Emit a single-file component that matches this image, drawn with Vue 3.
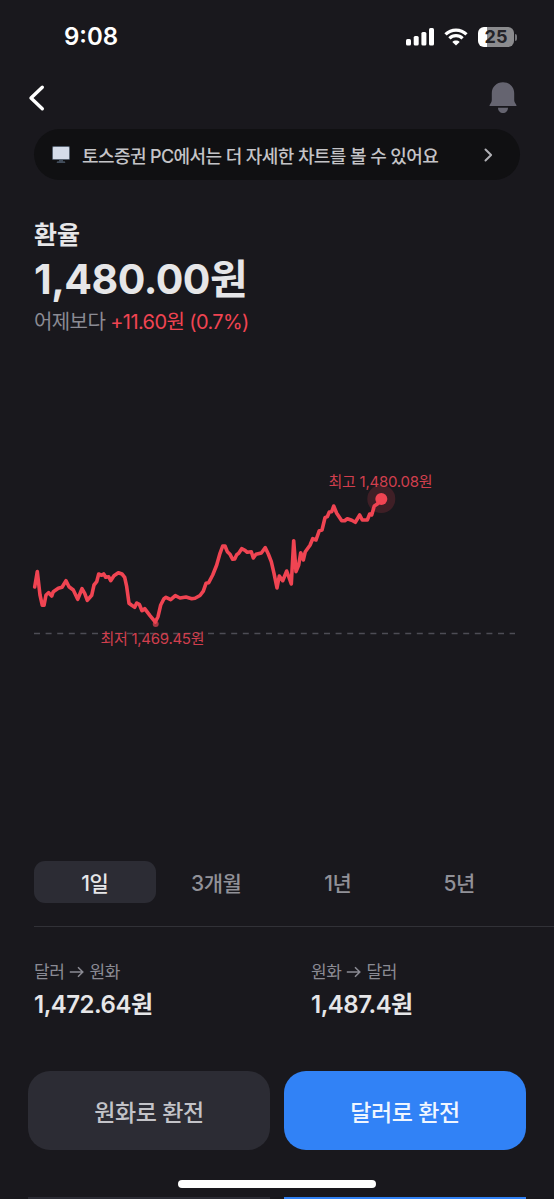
<template>
  <div class="screen">
    <div class="status-bar">
      <span class="time">9:08</span>
      <div class="status-icons">
        <svg class="signal" width="28" height="18" viewBox="0 0 28 18">
          <rect x="0" y="11" width="5" height="6.5" rx="1.5" />
          <rect x="7.7" y="8" width="5" height="9.5" rx="1.5" />
          <rect x="15.4" y="4" width="5" height="13.5" rx="1.5" />
          <rect x="23" y="0" width="5" height="17.5" rx="1.5" />
        </svg>
        <svg class="wifi" width="24" height="18" viewBox="0 0 24 18">
          <path d="M1.5 6.4C7.3.7 16.7.7 22.5 6.4" />
          <path d="M5.4 10.4c3.7-3.6 9.5-3.6 13.2 0" />
          <path class="dot" d="M12 17.5 8.3 13.9c2-1.8 5.4-1.8 7.4 0z" />
        </svg>
        <div class="battery">
          <div class="battery-body" :style="{ '--level': battery + '%' }">{{ battery }}</div>
          <div class="battery-tip"></div>
        </div>
      </div>
    </div>

    <header class="nav">
      <button class="icon-button" aria-label="뒤로">
        <svg width="18" height="28" viewBox="0 0 18 28">
          <path class="back" d="M14.3 3.2 3 14l11.3 10.8" />
        </svg>
      </button>
      <button class="icon-button" aria-label="알림">
        <svg width="28" height="32" viewBox="0 0 28 32">
          <path class="bell" d="M14 .3C7.6.3 2.8 5 2.8 11.2v6.3c0 2.2-.6 3.2-1.6 4.5-.7.9-.7 1.7-.7 2.1h27c0-.4 0-1.2-.7-2.1-1-1.3-1.6-2.3-1.6-4.5v-6.3C25.200 5 20.400.3 14 .3z" />
          <path class="bell" d="M9 25.700h10c0 3.100-2.200 5.300-5 5.300s-5-2.200-5-5.300z" />
        </svg>
      </button>
    </header>

    <a class="banner">
      <svg width="18" height="18" viewBox="0 0 18 18">
        <path fill="#424d5b" d="M7 12h4v3.300h1.500q.8 0 .8 1.700H4.700q0-1.700.8-1.700H7z" />
        <rect width="18" height="14" rx="1.500" fill="#56616f" />
        <rect x="1" y="1" width="16" height="12" rx=".5" fill="#d4dce9" />
      </svg>
      <span class="banner-text">토스증권 PC에서는 더 자세한 차트를 볼 수 있어요</span>
      <svg class="chevron" width="9" height="14" viewBox="0 0 9 14">
        <path d="m1.500 1.500 5.600 5.500-5.600 5.500" />
      </svg>
    </a>

    <section class="summary">
      <h1>환율</h1>
      <p class="rate">1,480.00원</p>
      <p class="change">어제보다 <span>+11.60원 (0.7%)</span></p>
    </section>

    <svg class="chart" width="554" height="340" viewBox="0 440 554 340">
      <line class="baseline" x1="34" y1="633.500" x2="515" y2="633.500" />
      <circle class="low-dot" cx="155.700" cy="624" r="3" />
      <polyline class="line" :points="linePoints" />
      <circle class="halo" cx="381.300" cy="499" r="14" />
      <circle class="high-dot" cx="381.300" cy="499" r="6" />
      <text x="328.500" y="486.500" textLength="104">최고 1,480.08원</text>
      <text x="100.500" y="643.500" textLength="104">최저 1,469.45원</text>
    </svg>

    <nav class="periods">
      <button
        v-for="period in periods"
        :key="period"
        :class="{ active: period === selected }"
        @click="selected = period"
      >
        {{ period }}
      </button>
    </nav>

    <section class="quotes">
      <div v-for="quote in quotes" :key="quote.from" class="quote">
        <p class="quote-label">
          {{ quote.from }}
          <svg width="15" height="12" viewBox="0 0 15 12">
            <path d="M.8 6h13M9 1.200 13.800 6 9 10.800" />
          </svg>
          {{ quote.to }}
        </p>
        <p class="quote-value">{{ quote.value }}</p>
      </div>
    </section>

    <footer class="actions">
      <button class="secondary">원화로 환전</button>
      <button class="primary">달러로 환전</button>
    </footer>
    <div class="home-indicator"></div>
    <div class="bottom-edge">
      <span class="secondary"></span>
      <span class="primary"></span>
    </div>
  </div>
</template>

<script setup>
import { ref } from 'vue'

const battery = 25
const periods = ['1일', '3개월', '1년', '5년']
const selected = ref('1일')

const quotes = [
  { from: '달러', to: '원화', value: '1,472.64원' },
  { from: '원화', to: '달러', value: '1,487.4원' }
]

const points = [
  [34.7, 587], [37.3, 571.5], [40, 595], [42.3, 605.3], [44, 605.3], [46, 595], [48.7, 592.7],
  [51.7, 596], [53.3, 591.7], [58.3, 588.3], [62, 587.3], [66, 580.7], [69, 586.7], [73.3, 590],
  [77.7, 599.3], [82, 588.7], [84.7, 593.3], [87.3, 600.3], [91.7, 595.3], [94, 585], [96.7, 581.7],
  [98.7, 574], [101.7, 575.3], [103.7, 574], [105.7, 577.3], [108.7, 576.7], [110.7, 580.7],
  [114, 575.7], [118.3, 572.7], [122, 574], [124.7, 577.3], [126.7, 586.7], [129, 603.3],
  [131.7, 605.3], [134.7, 607.3], [136.7, 603], [139.3, 604.3], [142, 610.7], [144.7, 608.7],
  [150, 615.7], [155.3, 622], [158, 616.7], [160.7, 605], [164, 598.7], [166, 597.3],
  [170.7, 599.7], [175.3, 595.7], [180, 598], [186, 597], [191.7, 598.7], [195, 598.3],
  [200, 595.5], [203.3, 591.2], [206, 583.3], [208.7, 582.7], [212.7, 575], [216.7, 565],
  [220, 553.3], [222.7, 546], [225, 546], [227.3, 551.7], [230, 554.3], [232.7, 559.3],
  [234.7, 559], [236.7, 554.7], [238.7, 553.3], [241.7, 548.7], [245, 550.3], [247.3, 552.3],
  [251.3, 551.7], [253.3, 558], [256, 554.3], [261.3, 553], [265.3, 547.7], [268.3, 554],
  [271.3, 561.7], [274, 573.3], [277, 588], [279.3, 576], [282.7, 580.7], [286.7, 571],
  [291.3, 584], [293.7, 540.7], [296, 571.7], [298.7, 565], [300.7, 552.7], [303.3, 560],
  [305.3, 551.7], [310, 545.3], [312.7, 538.7], [316, 540], [319.3, 530.7], [322, 530],
  [325, 517.7], [327.3, 516.7], [329.3, 512], [331.7, 511.7], [333.7, 506], [336.7, 513.3],
  [341.7, 520.7], [344.7, 520.7], [347.3, 518.7], [351.7, 520.3], [355.3, 522.3], [359.7, 515],
  [362.3, 520], [367.3, 520], [369.7, 514], [371.7, 515], [374.3, 506], [377.3, 504], [381.3, 499.3]
]
const linePoints = points.map((p) => p.join(',')).join(' ')
</script>

<style>
body {
  margin: 0;
  background: #19181d;
}
</style>

<style scoped>
.screen {
  display: flex;
  flex-direction: column;
  width: 554px;
  height: 1199px;
  overflow: hidden;
  background: #19181d;
  color: #e6e6e8;
  font-family: Inter, "Noto Sans CJK KR", sans-serif;
}
h1,
p {
  margin: 0;
  white-space: nowrap;
}
button {
  padding: 0;
  border: none;
  background: none;
  color: inherit;
  font: inherit;
  cursor: pointer;
}
svg {
  display: block;
  flex: none;
}
.status-bar {
  display: flex;
  justify-content: space-between;
  height: 74px;
  padding: 0 37px 0 64px;
  line-height: 74px;
  color: #fff;
  box-sizing: border-box;
}
.time {
  font-size: 24px;
  font-weight: 600;
}
.status-icons {
  display: flex;
  align-items: center;
  gap: 10px;
}
.signal {
  fill: #fff;
}
.wifi {
  fill: none;
  stroke: #fff;
  stroke-width: 3.2;
}
.wifi .dot {
  fill: #fff;
  stroke: none;
}
.battery {
  display: flex;
  align-items: center;
  gap: 1px;
}
.battery-body {
  width: 36px;
  height: 20px;
  border-radius: 6px;
  background: linear-gradient(to right, #fff var(--level), #8b8b8e var(--level));
  color: #242328;
  font-size: 18px;
  font-weight: 700;
  line-height: 20px;
  text-align: center;
}
.battery-tip {
  width: 2px;
  height: 7px;
  border-radius: 0 2px 2px 0;
  background: #77777b;
}
.nav {
  display: flex;
  align-items: center;
  justify-content: space-between;
  height: 55px;
  padding: 0 37px 7px 28px;
  box-sizing: border-box;
}
.back {
  fill: none;
  stroke: #fff;
  stroke-width: 3.4;
  stroke-linecap: round;
  stroke-linejoin: round;
}
.bell {
  fill: #656470;
}
.banner {
  display: flex;
  align-items: center;
  height: 51px;
  margin: 0 34px;
  padding: 0 27px 0 18px;
  border-radius: 26px;
  background: #101012;
  box-sizing: border-box;
}
.banner-text {
  flex: 1;
  margin-left: 12px;
  color: #c4c4c7;
  font-size: 18px;
  font-weight: 500;
  letter-spacing: -0.6px;
  white-space: nowrap;
}
.chevron {
  fill: none;
  stroke: #b0b0b5;
  stroke-width: 2;
  stroke-linecap: round;
  stroke-linejoin: round;
}
.summary {
  height: 260px;
  padding: 38px 34px 0;
  box-sizing: border-box;
}
h1 {
  font-size: 25px;
  font-weight: 600;
  line-height: 34px;
}
.rate {
  font-size: 41px;
  font-weight: 700;
  line-height: 54px;
  letter-spacing: -0.5px;
}
.change {
  margin-top: 2px;
  color: #8b8b94;
  font-size: 20px;
  line-height: 28px;
  letter-spacing: -0.6px;
}
.change span {
  color: #f04452;
}
.line {
  fill: none;
  stroke: #f04452;
  stroke-width: 3.6;
  stroke-linecap: round;
  stroke-linejoin: round;
}
.baseline {
  stroke: #4d4c55;
  stroke-width: 1.5;
  stroke-dasharray: 6 5.6;
}
.low-dot {
  fill: #a83541;
}
.high-dot {
  fill: #f04452;
}
.halo {
  fill: #f04452;
  opacity: 0.18;
}
.chart text {
  fill: #d13f4e;
  font-size: 15px;
}
.periods {
  display: grid;
  grid-template-columns: repeat(4, 1fr);
  height: 42px;
  margin: 81px 34px 0;
  flex: none;
}
.periods button {
  border-radius: 11px;
  color: #919198;
  font-size: 21px;
  font-weight: 500;
  letter-spacing: -0.5px;
}
.periods .active {
  background: #2c2c34;
  color: #e6e6e8;
}
.quotes {
  display: grid;
  grid-template-columns: 277px 1fr;
  height: 124px;
  margin: 23px 0 0 34px;
  padding-top: 33px;
  border-top: 1px solid #313137;
  flex: none;
  box-sizing: border-box;
}
.quote-label {
  display: flex;
  align-items: center;
  gap: 5px;
  color: #8b8b94;
  font-size: 17px;
  line-height: 24px;
  letter-spacing: -0.4px;
}
.quote-label svg {
  fill: none;
  stroke: #8b8b94;
  stroke-width: 1.5;
}
.quote-value {
  margin-top: 4px;
  font-size: 24px;
  font-weight: 600;
  line-height: 34px;
  letter-spacing: -0.5px;
}
.actions {
  display: grid;
  grid-template-columns: 1fr 1fr;
  gap: 14px;
  height: 79px;
  margin: 21px 28px 0;
  flex: none;
}
.actions button {
  border-radius: 22px;
  font-size: 23px;
  font-weight: 500;
  letter-spacing: -0.4px;
}
.secondary {
  background: #2c2c34;
  color: #c3c3c8;
}
.primary {
  background: #3182f6;
  color: #f0f6ff;
}
.home-indicator {
  width: 198px;
  height: 8px;
  margin: 30px auto 0 178px;
  border-radius: 4px;
  background: #fff;
  flex: none;
}
.bottom-edge {
  display: grid;
  grid-template-columns: 1fr 1fr;
  gap: 14px;
  height: 2px;
  margin: 9px 28px 0;
  flex: none;
}
</style>
